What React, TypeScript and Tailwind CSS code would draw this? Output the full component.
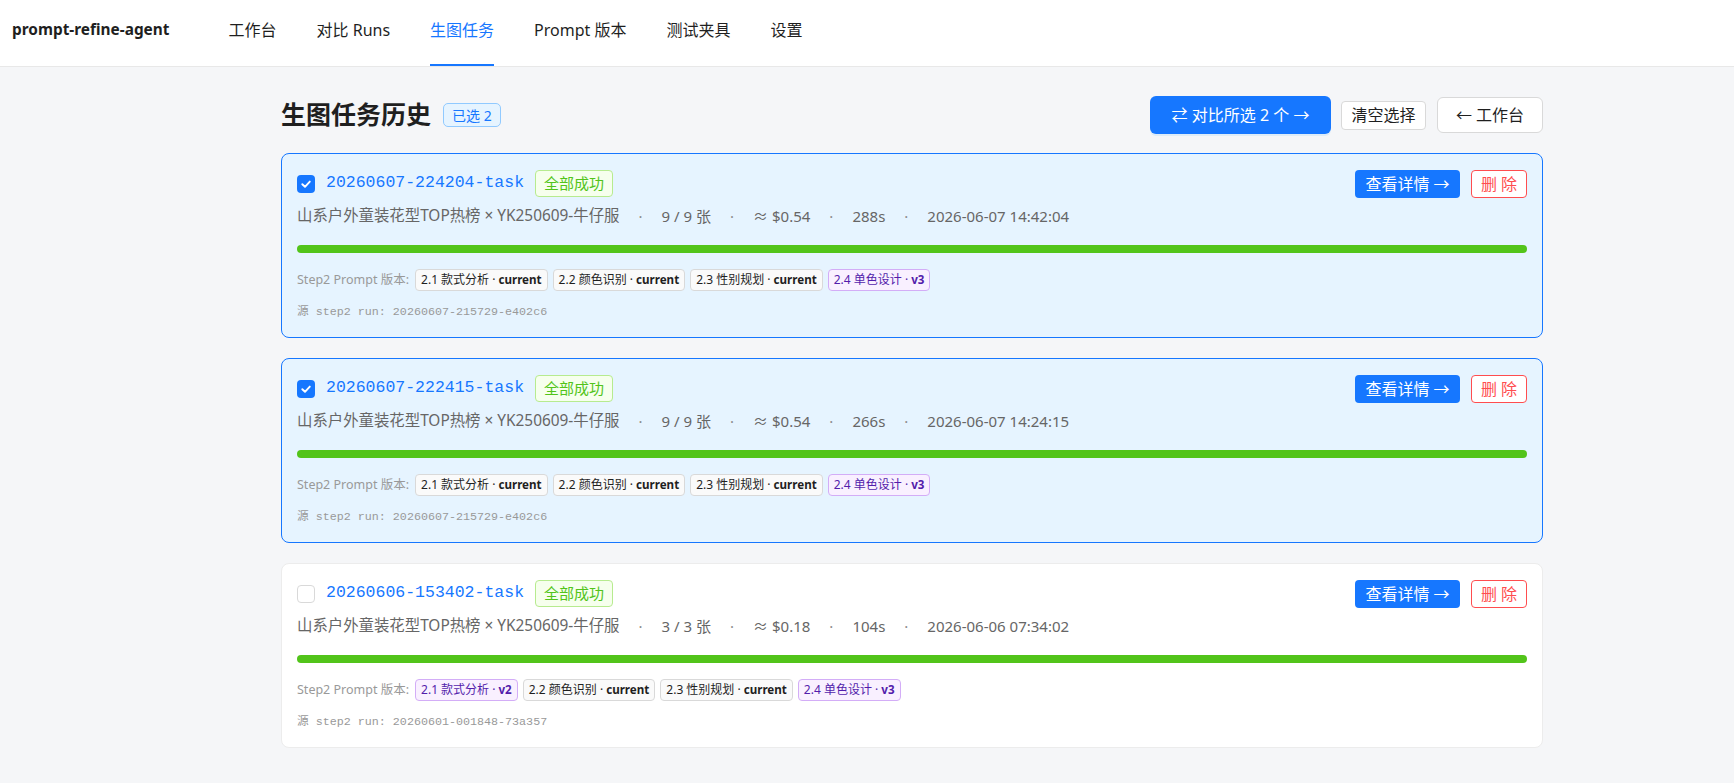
import React from "react";

type Version = { name: string; ver: string };
type Task = {
  id: string;
  selected: boolean;
  count: string;
  cost: string;
  time: string;
  date: string;
  versions: Version[];
  src: string;
};

const tasks: Task[] = [
  {
    id: "20260607-224204-task",
    selected: true,
    count: "9 / 9 张",
    cost: "$0.54",
    time: "288s",
    date: "2026-06-07 14:42:04",
    versions: [
      { name: "2.1 款式分析", ver: "current" },
      { name: "2.2 颜色识别", ver: "current" },
      { name: "2.3 性别规划", ver: "current" },
      { name: "2.4 单色设计", ver: "v3" },
    ],
    src: "20260607-215729-e402c6",
  },
  {
    id: "20260607-222415-task",
    selected: true,
    count: "9 / 9 张",
    cost: "$0.54",
    time: "266s",
    date: "2026-06-07 14:24:15",
    versions: [
      { name: "2.1 款式分析", ver: "current" },
      { name: "2.2 颜色识别", ver: "current" },
      { name: "2.3 性别规划", ver: "current" },
      { name: "2.4 单色设计", ver: "v3" },
    ],
    src: "20260607-215729-e402c6",
  },
  {
    id: "20260606-153402-task",
    selected: false,
    count: "3 / 3 张",
    cost: "$0.18",
    time: "104s",
    date: "2026-06-06 07:34:02",
    versions: [
      { name: "2.1 款式分析", ver: "v2" },
      { name: "2.2 颜色识别", ver: "current" },
      { name: "2.3 性别规划", ver: "current" },
      { name: "2.4 单色设计", ver: "v3" },
    ],
    src: "20260601-001848-73a357",
  },
];

const navItems = ["工作台", "对比 Runs", "生图任务", "Prompt 版本", "测试夹具", "设置"];

function Checkbox({ checked }: { checked: boolean }) {
  if (checked) {
    return (
      <span className="flex h-[18px] w-[18px] shrink-0 items-center justify-center rounded-[4px] bg-[#1677ff]">
        <svg width="12" height="12" viewBox="0 0 12 12" fill="none">
          <path d="M2.3 6.2 L5 8.8 L9.8 3.6" stroke="white" strokeWidth="1.9" strokeLinecap="round" strokeLinejoin="round" />
        </svg>
      </span>
    );
  }
  return <span className="block h-[18px] w-[18px] shrink-0 rounded-[4px] border border-[#d9d9d9] bg-white" />;
}

function Dot() {
  return <span className="text-[#8c8c8c]">·</span>;
}

function TaskCard({ t }: { t: Task }) {
  return (
    <div
      className={
        "rounded-[8px] border px-[15px] pt-[15px] pb-[16px] " +
        (t.selected ? "border-[#1677ff] bg-[#e6f4ff]" : "border-[#ececec] bg-white")
      }
    >
      <div className="flex h-[29px] items-center justify-between">
        <div className="flex items-center">
          <Checkbox checked={t.selected} />
          <span className="ml-[11px] font-['Liberation_Mono',monospace] text-[16.5px] text-[#1677ff]">{t.id}</span>
          <span className="ml-[11px] flex h-[27px] items-center rounded-[4px] border border-[#b7eb8f] bg-[#f6ffed] px-[8px] text-[15px] text-[#52c41a]">
            全部成功
          </span>
        </div>
        <div className="flex items-center gap-[11px]">
          <button className="flex h-[28px] w-[105px] items-center justify-center rounded-[4px] bg-[#1677ff] text-[16px] text-white">
            查看详情 →
          </button>
          <button className="flex h-[28px] w-[56px] items-center justify-center rounded-[4px] border border-[#ff4d4f] bg-white text-[16px] text-[#ff4d4f]">
            删 除
          </button>
        </div>
      </div>
      <div className="mt-[7px] flex items-center gap-[19px] text-[15px] leading-[22px] text-[#666666]">
        <span className="text-[15.4px]">山系户外童装花型TOP热榜 × YK250609-牛仔服</span>
        <Dot />
        <span>{t.count}</span>
        <Dot />
        <span>
          <span className="mr-[4px]">≈</span>
          {t.cost}
        </span>
        <Dot />
        <span>{t.time}</span>
        <Dot />
        <span>{t.date}</span>
      </div>
      <div className="mt-[18px] h-[8px] w-full rounded-full bg-[#52c41a]" />
      <div className="mt-[16px] flex h-[22px] items-center gap-[5px]">
        <span className="mr-[1px] text-[12.5px] text-[#999999]">Step2 Prompt 版本:</span>
        {t.versions.map((v) => {
          const cur = v.ver === "current";
          return (
            <span
              key={v.name}
              className={
                "flex h-[22px] items-center rounded-[4px] border px-[5px] text-[12px] " +
                (cur ? "border-[#d9d9d9] bg-[#fafafa] text-[#1f1f1f]" : "border-[#d3adf7] bg-[#f9f0ff] text-[#531dab]")
              }
            >
              {v.name} · <span className="ml-[3px] text-[11.6px] font-bold">{v.ver}</span>
            </span>
          );
        })}
      </div>
      <div className="mt-[12px] font-['Liberation_Mono','Noto_Sans_CJK_SC',monospace] text-[11.7px] leading-[18px] text-[#999999]">
        源 step2 run: {t.src}
      </div>
    </div>
  );
}

export default function App() {
  return (
    <div className="min-h-[783px] bg-[#f5f6f8] font-['Noto_Sans','Noto_Sans_CJK_SC',sans-serif] text-[#1f1f1f]">
      <header className="flex h-[67px] items-center border-b border-[#e8e8e8] bg-white pl-[12px]">
        <div className="pb-[6px] text-[15.4px] font-bold text-[#1f1f1f]">prompt-refine-agent</div>
        <nav className="ml-[39px] flex h-full items-stretch">
          {navItems.map((n) => {
            const active = n === "生图任务";
            return (
              <div key={n} className="mx-[20px] flex items-stretch">
                <span
                  className={
                    "flex items-center border-b-2 pb-[6px] pt-[2px] text-[16px] " +
                    (active ? "border-[#1677ff] text-[#1677ff]" : "border-transparent text-[#1f1f1f]")
                  }
                >
                  {n}
                </span>
              </div>
            );
          })}
        </nav>
      </header>
      <main className="ml-[281px] w-[1262px] pt-[29px] pb-[34px]">
        <div className="mb-[19px] flex h-[38px] items-center justify-between">
          <div className="flex items-center">
            <h1 className="text-[25px] font-semibold text-[#1f1f1f]">生图任务历史</h1>
            <span className="ml-[12px] flex h-[24px] items-center rounded-[5px] border border-[#91caff] bg-[#e6f4ff] px-[8px] text-[14px] text-[#1677ff]">
              已选 2
            </span>
          </div>
          <div className="flex items-center">
            <button className="flex h-[38px] w-[181px] items-center justify-center rounded-[6px] bg-[#1677ff] text-[16px] text-white shadow-[0_2px_0_rgba(5,145,255,0.1)]">
              ⇄ 对比所选 2 个 →
            </button>
            <button className="ml-[10px] flex h-[29px] w-[85px] items-center justify-center rounded-[4px] border border-[#d9d9d9] bg-white text-[16px] text-[#1f1f1f]">
              清空选择
            </button>
            <button className="ml-[11px] flex h-[36px] w-[106px] items-center justify-center rounded-[6px] border border-[#d9d9d9] bg-white text-[16px] text-[#1f1f1f]">
              ← 工作台
            </button>
          </div>
        </div>
        <div className="flex flex-col gap-[20px]">
          {tasks.map((t) => (
            <TaskCard key={t.id} t={t} />
          ))}
        </div>
      </main>
    </div>
  );
}
